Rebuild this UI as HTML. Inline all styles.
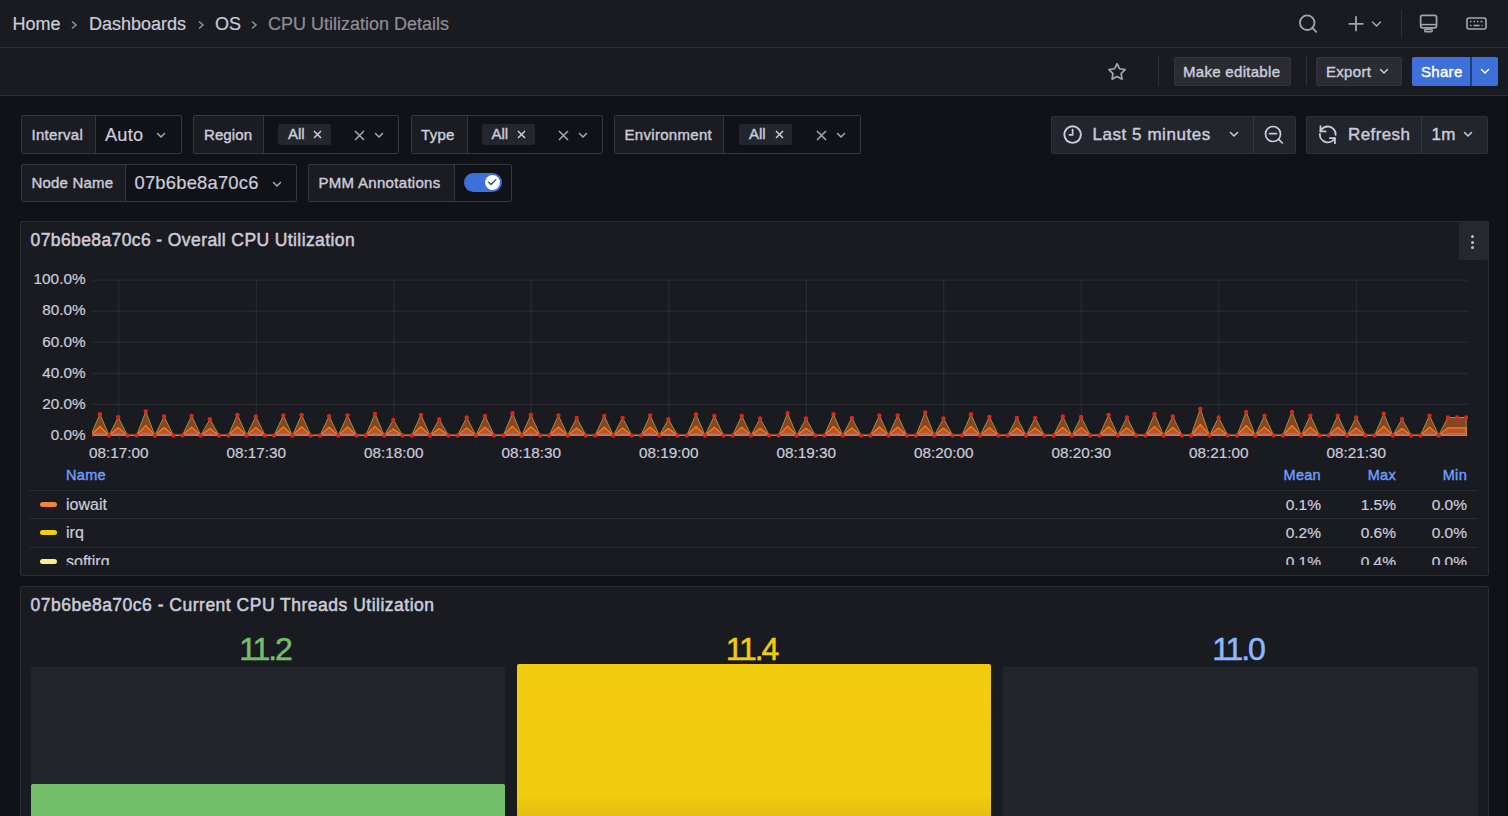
<!DOCTYPE html>
<html><head><meta charset="utf-8">
<style>
*{box-sizing:border-box;margin:0;padding:0}
html,body{width:1508px;height:816px;overflow:hidden;background:#111217;font-family:"Liberation Sans",sans-serif;color:#ccccdc}
.a{position:absolute}
.t{position:absolute;white-space:nowrap;line-height:1}
.bar{position:absolute;left:0;width:1508px;background:#1a1b20;border-bottom:1px solid #2c2e33}
.box{position:absolute;border:1px solid #36383e;border-radius:2px;background:#111217;overflow:hidden}
.lbl{position:absolute;top:0;bottom:0;left:0;background:#1b1c22;border-right:1px solid #36383e}
.chip{position:absolute;background:#23262c;border-radius:2px}
.btn{position:absolute;background:#2a2c31;border:1px solid #33353a;border-radius:2px}
.panel{position:absolute;background:#1a1b20;border:1px solid #2b2d33;border-radius:2px;overflow:hidden}
.sec{color:#8e8e99}
.m{-webkit-text-stroke:0.4px currentColor}
.m2{-webkit-text-stroke:0.2px currentColor}
svg.i{position:absolute;overflow:visible}
</style></head><body>
<!-- top bar -->
<div class="bar" style="top:0;height:48px"></div>
<div class="bar" style="top:48px;height:48px"></div>
<div class="t m2" style="left:12.5px;top:14.6px;font-size:18px">Home</div>
<svg class="i" style="left:70px;top:19.5px" width="8" height="10"><path d="M2 1.5 L6 5 L2 8.5" fill="none" stroke="#8e8e99" stroke-width="1.6"/></svg>
<div class="t m2" style="left:89px;top:14.6px;font-size:18px">Dashboards</div>
<svg class="i" style="left:196.5px;top:19.5px" width="8" height="10"><path d="M2 1.5 L6 5 L2 8.5" fill="none" stroke="#8e8e99" stroke-width="1.6"/></svg>
<div class="t m2" style="left:215px;top:14.6px;font-size:18px">OS</div>
<svg class="i" style="left:249.5px;top:19.5px" width="8" height="10"><path d="M2 1.5 L6 5 L2 8.5" fill="none" stroke="#8e8e99" stroke-width="1.6"/></svg>
<div class="t sec m2" style="left:268px;top:14.6px;font-size:18px">CPU Utilization Details</div>

<!-- top right icons -->
<svg class="i" style="left:1297px;top:12px" width="22" height="22" viewBox="0 0 22 22"><circle cx="10.2" cy="10.7" r="7.3" fill="none" stroke="#a4a4b0" stroke-width="1.8"/><path d="M15.5 16 L19.3 19.8" stroke="#a4a4b0" stroke-width="1.8" stroke-linecap="round"/></svg>
<svg class="i" style="left:1347px;top:15px" width="18" height="18" viewBox="0 0 18 18"><path d="M9 1.8 V15.5 M2.3 8.8 H15.8" stroke="#a4a4b0" stroke-width="1.8" stroke-linecap="round"/></svg>
<svg class="i" style="left:1371px;top:20px" width="11" height="8" viewBox="0 0 11 8"><path d="M1.5 2 L5.5 6 L9.5 2" fill="none" stroke="#a8a8b4" stroke-width="1.5" stroke-linecap="round"/></svg>
<div class="a" style="left:1401px;top:10px;width:1px;height:27px;background:#2f3136"></div>
<svg class="i" style="left:1419px;top:14px" width="20" height="20" viewBox="0 0 20 20"><rect x="1.65" y="1.35" width="15.9" height="12.5" rx="2" fill="none" stroke="#a4a4b0" stroke-width="1.7"/><path d="M1.65 10.6 H17.5" stroke="#a4a4b0" stroke-width="1.5"/><rect x="5.75" y="15.4" width="7.4" height="2.4" rx="1.1" fill="none" stroke="#a4a4b0" stroke-width="1.6"/></svg>
<svg class="i" style="left:1466px;top:17px" width="21" height="13" viewBox="0 0 21 13"><rect x="1" y="1" width="19" height="11" rx="2" fill="none" stroke="#a8a8b4" stroke-width="1.6"/><path d="M4 4.5h1.5M7.5 4.5h1.5M11 4.5h1.5M14.5 4.5h2M4 8.5h1.5M7.5 8.5h6M15.5 8.5h1" stroke="#a8a8b4" stroke-width="1.5"/></svg>

<!-- toolbar row -->
<svg class="i" style="left:1106px;top:61px" width="22" height="22" viewBox="0 0 22 22"><path d="M11.05 2.75 L13.58 7.77 L19.13 8.62 L15.14 12.58 L16.05 18.13 L11.05 15.55 L6.05 18.13 L6.96 12.58 L2.97 8.62 L8.52 7.77 Z" fill="none" stroke="#a4a4b0" stroke-width="1.7" stroke-linejoin="round"/></svg>
<div class="a" style="left:1158px;top:57px;width:1px;height:29px;background:#2f3136"></div>
<div class="btn" style="left:1174px;top:57px;width:117px;height:29px"></div>
<div class="t m" style="left:1183px;top:63.9px;font-size:15px;letter-spacing:0.3px">Make editable</div>
<div class="a" style="left:1306px;top:57px;width:1px;height:29px;background:#2f3136"></div>
<div class="btn" style="left:1316px;top:57px;width:86px;height:29px"></div>
<div class="t m" style="left:1326px;top:63.9px;font-size:15px;letter-spacing:0.3px">Export</div>
<svg class="i" style="left:1379px;top:68px" width="10" height="7" viewBox="0 0 10 7"><path d="M1.5 1.5 L5 5 L8.5 1.5" fill="none" stroke="#ccccdc" stroke-width="1.5" stroke-linecap="round"/></svg>
<div class="a" style="left:1412px;top:57px;width:86px;height:29px;background:#3d71d9;border-radius:2px"></div>
<div class="a" style="left:1470px;top:57px;width:1.5px;height:29px;background:#1f3f80"></div>
<div class="t m" style="left:1421px;top:63.9px;font-size:15px;letter-spacing:0.3px;color:#fff">Share</div>
<svg class="i" style="left:1480px;top:68px" width="10" height="7" viewBox="0 0 10 7"><path d="M1.5 1.5 L5 5 L8.5 1.5" fill="none" stroke="#fff" stroke-width="1.5" stroke-linecap="round"/></svg>

<!-- right scrollbar strip -->
<div class="a" style="left:1506px;top:96px;width:2px;height:720px;background:#0e0f13"></div>

<!-- variables row 1 -->
<div class="box" style="left:21px;top:115px;width:161px;height:39px"><div class="lbl" style="width:74px"></div></div>
<div class="t m" style="left:31.5px;top:126.8px;font-size:15px;letter-spacing:0.3px">Interval</div>
<div class="t m2" style="left:105px;top:126.2px;font-size:18.2px;letter-spacing:0.2px">Auto</div>
<svg class="i" style="left:156px;top:132px" width="10" height="7" viewBox="0 0 10 7"><path d="M1.5 1.5 L5 5 L8.5 1.5" fill="none" stroke="#a8a8b4" stroke-width="1.5" stroke-linecap="round"/></svg>

<div class="box" style="left:193px;top:115px;width:206px;height:39px"><div class="lbl" style="width:70px"></div></div>
<div class="t m" style="left:204px;top:126.8px;font-size:15px;letter-spacing:0.1px">Region</div>
<div class="chip" style="left:278px;top:124px;width:52.5px;height:21px"></div>
<div class="t m" style="left:288px;top:126.3px;font-size:15px">All</div>
<svg class="i" style="left:313px;top:130px" width="9" height="9" viewBox="0 0 9 9"><path d="M1 1 L8 8 M8 1 L1 8" stroke="#ccccdc" stroke-width="1.5"/></svg>
<svg class="i" style="left:354px;top:130px" width="11" height="11" viewBox="0 0 11 11"><path d="M1 1 L10 10 M10 1 L1 10" stroke="#a8a8b4" stroke-width="1.5"/></svg>
<svg class="i" style="left:374px;top:132px" width="10" height="7" viewBox="0 0 10 7"><path d="M1.5 1.5 L5 5 L8.5 1.5" fill="none" stroke="#a8a8b4" stroke-width="1.5" stroke-linecap="round"/></svg>

<div class="box" style="left:411px;top:115px;width:192px;height:39px"><div class="lbl" style="width:55.5px"></div></div>
<div class="t m" style="left:421px;top:126.8px;font-size:15px;letter-spacing:0.3px">Type</div>
<div class="chip" style="left:481.5px;top:124px;width:53px;height:21px"></div>
<div class="t m" style="left:491.5px;top:126.3px;font-size:15px">All</div>
<svg class="i" style="left:517px;top:130px" width="9" height="9" viewBox="0 0 9 9"><path d="M1 1 L8 8 M8 1 L1 8" stroke="#ccccdc" stroke-width="1.5"/></svg>
<svg class="i" style="left:558px;top:130px" width="11" height="11" viewBox="0 0 11 11"><path d="M1 1 L10 10 M10 1 L1 10" stroke="#a8a8b4" stroke-width="1.5"/></svg>
<svg class="i" style="left:578px;top:132px" width="10" height="7" viewBox="0 0 10 7"><path d="M1.5 1.5 L5 5 L8.5 1.5" fill="none" stroke="#a8a8b4" stroke-width="1.5" stroke-linecap="round"/></svg>

<div class="box" style="left:614px;top:115px;width:246.5px;height:39px"><div class="lbl" style="width:109px"></div></div>
<div class="t m" style="left:624.5px;top:126.8px;font-size:15px;letter-spacing:0.3px">Environment</div>
<div class="chip" style="left:739px;top:124px;width:53px;height:21px"></div>
<div class="t m" style="left:749px;top:126.3px;font-size:15px">All</div>
<svg class="i" style="left:774.5px;top:130px" width="9" height="9" viewBox="0 0 9 9"><path d="M1 1 L8 8 M8 1 L1 8" stroke="#ccccdc" stroke-width="1.5"/></svg>
<svg class="i" style="left:816px;top:130px" width="11" height="11" viewBox="0 0 11 11"><path d="M1 1 L10 10 M10 1 L1 10" stroke="#a8a8b4" stroke-width="1.5"/></svg>
<svg class="i" style="left:836px;top:132px" width="10" height="7" viewBox="0 0 10 7"><path d="M1.5 1.5 L5 5 L8.5 1.5" fill="none" stroke="#a8a8b4" stroke-width="1.5" stroke-linecap="round"/></svg>

<!-- variables row 2 -->
<div class="box" style="left:21px;top:163.5px;width:275.5px;height:38px"><div class="lbl" style="width:103.5px"></div></div>
<div class="t m" style="left:31.5px;top:174.5px;font-size:15px;letter-spacing:0.2px">Node Name</div>
<div class="t m2" style="left:134.5px;top:173.7px;font-size:18.4px;letter-spacing:0.2px">07b6be8a70c6</div>
<svg class="i" style="left:271.5px;top:180.5px" width="10" height="7" viewBox="0 0 10 7"><path d="M1.5 1.5 L5 5 L8.5 1.5" fill="none" stroke="#a8a8b4" stroke-width="1.5" stroke-linecap="round"/></svg>

<div class="box" style="left:308px;top:163.5px;width:204px;height:38px"><div class="lbl" style="width:145.5px"></div></div>
<div class="t m" style="left:318.5px;top:174.5px;font-size:15px;letter-spacing:0.3px">PMM Annotations</div>
<div class="a" style="left:463.5px;top:173px;width:38px;height:19px;border-radius:10px;background:#3d71d9"></div>
<div class="a" style="left:484.8px;top:174.9px;width:15px;height:15px;border-radius:8px;background:#fff"></div>
<svg class="i" style="left:487.2px;top:178.2px" width="11" height="9" viewBox="0 0 11 9"><path d="M1.5 4.2 L4 6.5 L8.8 1.8" fill="none" stroke="#3a4f94" stroke-width="1.4" stroke-linecap="round" stroke-linejoin="round"/></svg>

<!-- time picker -->
<div class="a" style="left:1051px;top:115.5px;width:244.5px;height:38px;background:#22252b;border:1px solid #2e3036;border-radius:2px"></div>
<div class="a" style="left:1253px;top:116px;width:1px;height:37px;background:#34363c"></div>
<svg class="i" style="left:1062.5px;top:125px" width="19" height="19" viewBox="0 0 19 19"><circle cx="9.6" cy="9.6" r="8.3" fill="none" stroke="#ccccdc" stroke-width="1.9"/><path d="M9.6 4.6 V9.8 H6.4" fill="none" stroke="#ccccdc" stroke-width="1.7" stroke-linecap="round"/></svg>
<div class="t m" style="left:1092.5px;top:126.1px;font-size:17px;letter-spacing:0.55px">Last 5 minutes</div>
<svg class="i" style="left:1228.5px;top:131px" width="10" height="7" viewBox="0 0 10 7"><path d="M1.5 1.5 L5 5 L8.5 1.5" fill="none" stroke="#ccccdc" stroke-width="1.5" stroke-linecap="round"/></svg>
<svg class="i" style="left:1263.5px;top:125px" width="21" height="21" viewBox="0 0 21 21"><circle cx="9" cy="9" r="7.5" fill="none" stroke="#ccccdc" stroke-width="1.7"/><path d="M5.5 8.6 H12.5 M14.5 14.2 L18.3 18" stroke="#ccccdc" stroke-width="1.7" stroke-linecap="round"/></svg>

<div class="a" style="left:1306px;top:115.5px;width:182px;height:38px;background:#22252b;border:1px solid #2e3036;border-radius:2px"></div>
<div class="a" style="left:1421px;top:116px;width:1px;height:37px;background:#34363c"></div>
<svg class="i" style="left:1317.5px;top:125px" width="20" height="20" viewBox="0 0 20 20"><path d="M17.64 9.81 A7.9 7.9 0 0 0 2.43 6.44 M1.86 8.99 A7.9 7.9 0 0 0 16.73 13.11" fill="none" stroke="#ccccdc" stroke-width="1.8" stroke-linecap="round"/><path d="M2.5 1.2 V6.4 H7.6 M11.9 13.2 H16.9 V18.2" fill="none" stroke="#ccccdc" stroke-width="1.8" stroke-linecap="round" stroke-linejoin="round"/></svg>
<div class="t m" style="left:1348px;top:126.1px;font-size:17px;letter-spacing:0.4px">Refresh</div>
<div class="t m" style="left:1431.5px;top:126.1px;font-size:17px;letter-spacing:0.3px">1m</div>
<svg class="i" style="left:1463px;top:131px" width="10" height="7" viewBox="0 0 10 7"><path d="M1.5 1.5 L5 5 L8.5 1.5" fill="none" stroke="#ccccdc" stroke-width="1.5" stroke-linecap="round"/></svg>

<!-- panel 1 -->
<div class="panel" style="left:20px;top:221px;width:1469px;height:355px"></div>
<div class="a" style="left:1459px;top:222px;width:29px;height:38px;background:#26282d;border-radius:2px"></div>
<div class="a" style="left:1471px;top:235px;width:3px;height:3px;border-radius:2px;background:#c0c0cc"></div>
<div class="a" style="left:1471px;top:240.5px;width:3px;height:3px;border-radius:2px;background:#c0c0cc"></div>
<div class="a" style="left:1471px;top:246px;width:3px;height:3px;border-radius:2px;background:#c0c0cc"></div>
<div class="t m" style="left:30.5px;top:232.0px;font-size:17.5px;letter-spacing:0.4px;-webkit-text-stroke:0.5px currentColor">07b6be8a70c6 - Overall CPU Utilization</div>
<div class="t m2" style="left:25px;top:271.3px;width:60.5px;text-align:right;font-size:15.3px">100.0%</div>
<div class="t m2" style="left:25px;top:302.4px;width:60.5px;text-align:right;font-size:15.3px">80.0%</div>
<div class="t m2" style="left:25px;top:333.5px;width:60.5px;text-align:right;font-size:15.3px">60.0%</div>
<div class="t m2" style="left:25px;top:364.5px;width:60.5px;text-align:right;font-size:15.3px">40.0%</div>
<div class="t m2" style="left:25px;top:395.6px;width:60.5px;text-align:right;font-size:15.3px">20.0%</div>
<div class="t m2" style="left:25px;top:426.6px;width:60.5px;text-align:right;font-size:15.3px">0.0%</div>
<div class="t m2" style="left:68.8px;top:445.0px;width:100px;text-align:center;font-size:15.3px">08:17:00</div>
<div class="t m2" style="left:206.3px;top:445.0px;width:100px;text-align:center;font-size:15.3px">08:17:30</div>
<div class="t m2" style="left:343.8px;top:445.0px;width:100px;text-align:center;font-size:15.3px">08:18:00</div>
<div class="t m2" style="left:481.3px;top:445.0px;width:100px;text-align:center;font-size:15.3px">08:18:30</div>
<div class="t m2" style="left:618.8px;top:445.0px;width:100px;text-align:center;font-size:15.3px">08:19:00</div>
<div class="t m2" style="left:756.3px;top:445.0px;width:100px;text-align:center;font-size:15.3px">08:19:30</div>
<div class="t m2" style="left:893.8px;top:445.0px;width:100px;text-align:center;font-size:15.3px">08:20:00</div>
<div class="t m2" style="left:1031.3px;top:445.0px;width:100px;text-align:center;font-size:15.3px">08:20:30</div>
<div class="t m2" style="left:1168.8px;top:445.0px;width:100px;text-align:center;font-size:15.3px">08:21:00</div>
<div class="t m2" style="left:1306.3px;top:445.0px;width:100px;text-align:center;font-size:15.3px">08:21:30</div>
<svg class="chart" width="1508" height="816" viewBox="0 0 1508 816" style="position:absolute;left:0;top:0">
<defs><clipPath id="pc"><rect x="92" y="270" width="1376" height="170"/></clipPath></defs>
<line x1="92" y1="280.1" x2="1468" y2="280.1" stroke="rgba(204,204,220,0.10)" stroke-width="1"/>
<line x1="92" y1="311.2" x2="1468" y2="311.2" stroke="rgba(204,204,220,0.10)" stroke-width="1"/>
<line x1="92" y1="342.2" x2="1468" y2="342.2" stroke="rgba(204,204,220,0.10)" stroke-width="1"/>
<line x1="92" y1="373.3" x2="1468" y2="373.3" stroke="rgba(204,204,220,0.10)" stroke-width="1"/>
<line x1="92" y1="404.3" x2="1468" y2="404.3" stroke="rgba(204,204,220,0.10)" stroke-width="1"/>
<line x1="92" y1="435.4" x2="1468" y2="435.4" stroke="rgba(204,204,220,0.10)" stroke-width="1"/>
<line x1="118.8" y1="280.1" x2="118.8" y2="440" stroke="rgba(204,204,220,0.10)" stroke-width="1"/>
<line x1="256.3" y1="280.1" x2="256.3" y2="440" stroke="rgba(204,204,220,0.10)" stroke-width="1"/>
<line x1="393.8" y1="280.1" x2="393.8" y2="440" stroke="rgba(204,204,220,0.10)" stroke-width="1"/>
<line x1="531.3" y1="280.1" x2="531.3" y2="440" stroke="rgba(204,204,220,0.10)" stroke-width="1"/>
<line x1="668.8" y1="280.1" x2="668.8" y2="440" stroke="rgba(204,204,220,0.10)" stroke-width="1"/>
<line x1="806.3" y1="280.1" x2="806.3" y2="440" stroke="rgba(204,204,220,0.10)" stroke-width="1"/>
<line x1="943.8" y1="280.1" x2="943.8" y2="440" stroke="rgba(204,204,220,0.10)" stroke-width="1"/>
<line x1="1081.3" y1="280.1" x2="1081.3" y2="440" stroke="rgba(204,204,220,0.10)" stroke-width="1"/>
<line x1="1218.8" y1="280.1" x2="1218.8" y2="440" stroke="rgba(204,204,220,0.10)" stroke-width="1"/>
<line x1="1356.3" y1="280.1" x2="1356.3" y2="440" stroke="rgba(204,204,220,0.10)" stroke-width="1"/>
<g clip-path="url(#pc)">
<polygon points="90.7,435.4 90.7,435.4 99.9,414.3 109.1,435.4 118.2,417.3 127.4,435.4 136.6,435.4 145.8,411.5 154.9,435.4 164.1,416.5 173.3,435.4 182.4,435.4 191.6,415.9 200.8,435.4 209.9,419.3 219.1,435.4 228.3,435.4 237.4,414.9 246.6,435.4 255.8,416.5 265.0,435.4 274.1,435.4 283.3,415.5 292.5,435.4 301.6,414.9 310.8,435.4 320.0,435.4 329.1,416.1 338.3,435.4 347.5,415.5 356.7,435.4 365.8,435.4 375.0,413.9 384.2,435.4 393.3,419.9 402.5,435.4 411.7,435.4 420.9,414.9 430.0,435.4 439.2,419.3 448.4,435.4 457.5,435.4 466.7,417.5 475.9,435.4 485.0,415.9 494.2,435.4 503.4,435.4 512.5,413.3 521.7,435.4 530.9,414.9 540.1,435.4 549.2,435.4 558.4,415.5 567.6,435.4 576.7,417.9 585.9,435.4 595.1,435.4 604.2,415.9 613.4,435.4 622.6,417.9 631.8,435.4 640.9,435.4 650.1,415.5 659.3,435.4 668.4,419.3 677.6,435.4 686.8,435.4 696.0,414.3 705.1,435.4 714.3,415.9 723.5,435.4 732.6,435.4 741.8,415.9 751.0,435.4 760.1,418.5 769.3,435.4 778.5,435.4 787.6,413.3 796.8,435.4 806.0,418.5 815.2,435.4 824.3,435.4 833.5,414.3 842.7,435.4 851.8,417.9 861.0,435.4 870.2,435.4 879.4,415.5 888.5,435.4 897.7,415.5 906.9,435.4 916.0,435.4 925.2,412.5 934.4,435.4 943.5,418.5 952.7,435.4 961.9,435.4 971.0,414.3 980.2,435.4 989.4,416.9 998.6,435.4 1007.7,435.4 1016.9,417.9 1026.1,435.4 1035.2,417.9 1044.4,435.4 1053.6,435.4 1062.8,416.5 1071.9,435.4 1081.1,416.9 1090.3,435.4 1099.4,435.4 1108.6,415.0 1117.8,435.4 1126.9,417.5 1136.1,435.4 1145.3,435.4 1154.5,414.0 1163.6,435.4 1172.8,416.5 1182.0,435.4 1191.1,435.4 1200.3,409.0 1209.5,435.4 1218.6,417.5 1227.8,435.4 1237.0,435.4 1246.2,411.9 1255.3,435.4 1264.5,415.6 1273.7,435.4 1282.8,435.4 1292.0,411.9 1301.2,435.4 1310.3,415.6 1319.5,435.4 1328.7,435.4 1337.8,415.6 1347.0,435.4 1356.2,417.5 1365.4,435.4 1374.5,435.4 1383.7,413.8 1392.9,435.4 1402.0,419.0 1411.2,435.4 1420.4,435.4 1429.5,415.6 1438.7,435.4 1447.9,417.5 1457.1,417.5 1466.2,417.5 1466.2,435.4" fill="#8a4520" stroke="#a09046" stroke-width="1" stroke-linejoin="round"/>
<polygon points="90.7,435.4 90.7,435.4 99.9,426.5 109.1,435.4 118.2,427.8 127.4,435.4 136.6,435.4 145.8,425.4 154.9,435.4 164.1,427.5 173.3,435.4 182.4,435.4 191.6,427.2 200.8,435.4 209.9,428.6 219.1,435.4 228.3,435.4 237.4,426.8 246.6,435.4 255.8,427.5 265.0,435.4 274.1,435.4 283.3,427.0 292.5,435.4 301.6,426.8 310.8,435.4 320.0,435.4 329.1,427.3 338.3,435.4 347.5,427.0 356.7,435.4 365.8,435.4 375.0,426.4 384.2,435.4 393.3,428.9 402.5,435.4 411.7,435.4 420.9,426.8 430.0,435.4 439.2,428.6 448.4,435.4 457.5,435.4 466.7,427.9 475.9,435.4 485.0,427.2 494.2,435.4 503.4,435.4 512.5,426.1 521.7,435.4 530.9,426.8 540.1,435.4 549.2,435.4 558.4,427.0 567.6,435.4 576.7,428.0 585.9,435.4 595.1,435.4 604.2,427.2 613.4,435.4 622.6,428.0 631.8,435.4 640.9,435.4 650.1,427.0 659.3,435.4 668.4,428.6 677.6,435.4 686.8,435.4 696.0,426.5 705.1,435.4 714.3,427.2 723.5,435.4 732.6,435.4 741.8,427.2 751.0,435.4 760.1,428.3 769.3,435.4 778.5,435.4 787.6,426.1 796.8,435.4 806.0,428.3 815.2,435.4 824.3,435.4 833.5,426.5 842.7,435.4 851.8,428.0 861.0,435.4 870.2,435.4 879.4,427.0 888.5,435.4 897.7,427.0 906.9,435.4 916.0,435.4 925.2,425.8 934.4,435.4 943.5,428.3 952.7,435.4 961.9,435.4 971.0,426.5 980.2,435.4 989.4,427.6 998.6,435.4 1007.7,435.4 1016.9,428.0 1026.1,435.4 1035.2,428.0 1044.4,435.4 1053.6,435.4 1062.8,427.5 1071.9,435.4 1081.1,427.6 1090.3,435.4 1099.4,435.4 1108.6,426.8 1117.8,435.4 1126.9,427.9 1136.1,435.4 1145.3,435.4 1154.5,426.4 1163.6,435.4 1172.8,427.5 1182.0,435.4 1191.1,435.4 1200.3,424.3 1209.5,435.4 1218.6,427.9 1227.8,435.4 1237.0,435.4 1246.2,425.5 1255.3,435.4 1264.5,427.1 1273.7,435.4 1282.8,435.4 1292.0,425.5 1301.2,435.4 1310.3,427.1 1319.5,435.4 1328.7,435.4 1337.8,427.1 1347.0,435.4 1356.2,427.9 1365.4,435.4 1374.5,435.4 1383.7,426.3 1392.9,435.4 1402.0,428.5 1411.2,435.4 1420.4,435.4 1429.5,427.1 1438.7,435.4 1447.9,427.9 1457.1,427.9 1466.2,427.9 1466.2,435.4" fill="#b9561a" stroke="#f0802e" stroke-width="1.2" stroke-linejoin="round"/>
<polygon points="90.7,435.4 90.7,435.4 99.9,433.5 109.1,435.4 118.2,433.8 127.4,435.4 136.6,435.4 145.8,433.2 154.9,435.4 164.1,433.7 173.3,435.4 182.4,435.4 191.6,433.6 200.8,435.4 209.9,434.0 219.1,435.4 228.3,435.4 237.4,433.6 246.6,435.4 255.8,433.7 265.0,435.4 274.1,435.4 283.3,433.6 292.5,435.4 301.6,433.6 310.8,435.4 320.0,435.4 329.1,433.7 338.3,435.4 347.5,433.6 356.7,435.4 365.8,435.4 375.0,433.5 384.2,435.4 393.3,434.0 402.5,435.4 411.7,435.4 420.9,433.6 430.0,435.4 439.2,434.0 448.4,435.4 457.5,435.4 466.7,433.8 475.9,435.4 485.0,433.6 494.2,435.4 503.4,435.4 512.5,433.4 521.7,435.4 530.9,433.6 540.1,435.4 549.2,435.4 558.4,433.6 567.6,435.4 576.7,433.8 585.9,435.4 595.1,435.4 604.2,433.6 613.4,435.4 622.6,433.8 631.8,435.4 640.9,435.4 650.1,433.6 659.3,435.4 668.4,434.0 677.6,435.4 686.8,435.4 696.0,433.5 705.1,435.4 714.3,433.6 723.5,435.4 732.6,435.4 741.8,433.6 751.0,435.4 760.1,433.9 769.3,435.4 778.5,435.4 787.6,433.4 796.8,435.4 806.0,433.9 815.2,435.4 824.3,435.4 833.5,433.5 842.7,435.4 851.8,433.8 861.0,435.4 870.2,435.4 879.4,433.6 888.5,435.4 897.7,433.6 906.9,435.4 916.0,435.4 925.2,433.3 934.4,435.4 943.5,433.9 952.7,435.4 961.9,435.4 971.0,433.5 980.2,435.4 989.4,433.7 998.6,435.4 1007.7,435.4 1016.9,433.8 1026.1,435.4 1035.2,433.8 1044.4,435.4 1053.6,435.4 1062.8,433.7 1071.9,435.4 1081.1,433.7 1090.3,435.4 1099.4,435.4 1108.6,433.6 1117.8,435.4 1126.9,433.8 1136.1,435.4 1145.3,435.4 1154.5,433.5 1163.6,435.4 1172.8,433.7 1182.0,435.4 1191.1,435.4 1200.3,433.0 1209.5,435.4 1218.6,433.8 1227.8,435.4 1237.0,435.4 1246.2,433.3 1255.3,435.4 1264.5,433.6 1273.7,435.4 1282.8,435.4 1292.0,433.3 1301.2,435.4 1310.3,433.6 1319.5,435.4 1328.7,435.4 1337.8,433.6 1347.0,435.4 1356.2,433.8 1365.4,435.4 1374.5,435.4 1383.7,433.5 1392.9,435.4 1402.0,433.9 1411.2,435.4 1420.4,435.4 1429.5,433.6 1438.7,435.4 1447.9,433.8 1457.1,433.8 1466.2,433.8 1466.2,435.4" fill="#b85a5c" stroke="#d86a7a" stroke-width="1"/>
<line x1="92" y1="435.4" x2="1467" y2="435.4" stroke="#6ea86a" stroke-width="1" stroke-opacity="0.7"/>
<circle cx="90.7" cy="435.4" r="2.2" fill="#d8281a"/>
<circle cx="99.9" cy="414.3" r="2.2" fill="#d8281a"/>
<circle cx="109.1" cy="435.4" r="2.2" fill="#d8281a"/>
<circle cx="118.2" cy="417.3" r="2.2" fill="#d8281a"/>
<circle cx="127.4" cy="435.4" r="2.2" fill="#d8281a"/>
<circle cx="136.6" cy="435.4" r="2.2" fill="#d8281a"/>
<circle cx="145.8" cy="411.5" r="2.2" fill="#d8281a"/>
<circle cx="154.9" cy="435.4" r="2.2" fill="#d8281a"/>
<circle cx="164.1" cy="416.5" r="2.2" fill="#d8281a"/>
<circle cx="173.3" cy="435.4" r="2.2" fill="#d8281a"/>
<circle cx="182.4" cy="435.4" r="2.2" fill="#d8281a"/>
<circle cx="191.6" cy="415.9" r="2.2" fill="#d8281a"/>
<circle cx="200.8" cy="435.4" r="2.2" fill="#d8281a"/>
<circle cx="209.9" cy="419.3" r="2.2" fill="#d8281a"/>
<circle cx="219.1" cy="435.4" r="2.2" fill="#d8281a"/>
<circle cx="228.3" cy="435.4" r="2.2" fill="#d8281a"/>
<circle cx="237.4" cy="414.9" r="2.2" fill="#d8281a"/>
<circle cx="246.6" cy="435.4" r="2.2" fill="#d8281a"/>
<circle cx="255.8" cy="416.5" r="2.2" fill="#d8281a"/>
<circle cx="265.0" cy="435.4" r="2.2" fill="#d8281a"/>
<circle cx="274.1" cy="435.4" r="2.2" fill="#d8281a"/>
<circle cx="283.3" cy="415.5" r="2.2" fill="#d8281a"/>
<circle cx="292.5" cy="435.4" r="2.2" fill="#d8281a"/>
<circle cx="301.6" cy="414.9" r="2.2" fill="#d8281a"/>
<circle cx="310.8" cy="435.4" r="2.2" fill="#d8281a"/>
<circle cx="320.0" cy="435.4" r="2.2" fill="#d8281a"/>
<circle cx="329.1" cy="416.1" r="2.2" fill="#d8281a"/>
<circle cx="338.3" cy="435.4" r="2.2" fill="#d8281a"/>
<circle cx="347.5" cy="415.5" r="2.2" fill="#d8281a"/>
<circle cx="356.7" cy="435.4" r="2.2" fill="#d8281a"/>
<circle cx="365.8" cy="435.4" r="2.2" fill="#d8281a"/>
<circle cx="375.0" cy="413.9" r="2.2" fill="#d8281a"/>
<circle cx="384.2" cy="435.4" r="2.2" fill="#d8281a"/>
<circle cx="393.3" cy="419.9" r="2.2" fill="#d8281a"/>
<circle cx="402.5" cy="435.4" r="2.2" fill="#d8281a"/>
<circle cx="411.7" cy="435.4" r="2.2" fill="#d8281a"/>
<circle cx="420.9" cy="414.9" r="2.2" fill="#d8281a"/>
<circle cx="430.0" cy="435.4" r="2.2" fill="#d8281a"/>
<circle cx="439.2" cy="419.3" r="2.2" fill="#d8281a"/>
<circle cx="448.4" cy="435.4" r="2.2" fill="#d8281a"/>
<circle cx="457.5" cy="435.4" r="2.2" fill="#d8281a"/>
<circle cx="466.7" cy="417.5" r="2.2" fill="#d8281a"/>
<circle cx="475.9" cy="435.4" r="2.2" fill="#d8281a"/>
<circle cx="485.0" cy="415.9" r="2.2" fill="#d8281a"/>
<circle cx="494.2" cy="435.4" r="2.2" fill="#d8281a"/>
<circle cx="503.4" cy="435.4" r="2.2" fill="#d8281a"/>
<circle cx="512.5" cy="413.3" r="2.2" fill="#d8281a"/>
<circle cx="521.7" cy="435.4" r="2.2" fill="#d8281a"/>
<circle cx="530.9" cy="414.9" r="2.2" fill="#d8281a"/>
<circle cx="540.1" cy="435.4" r="2.2" fill="#d8281a"/>
<circle cx="549.2" cy="435.4" r="2.2" fill="#d8281a"/>
<circle cx="558.4" cy="415.5" r="2.2" fill="#d8281a"/>
<circle cx="567.6" cy="435.4" r="2.2" fill="#d8281a"/>
<circle cx="576.7" cy="417.9" r="2.2" fill="#d8281a"/>
<circle cx="585.9" cy="435.4" r="2.2" fill="#d8281a"/>
<circle cx="595.1" cy="435.4" r="2.2" fill="#d8281a"/>
<circle cx="604.2" cy="415.9" r="2.2" fill="#d8281a"/>
<circle cx="613.4" cy="435.4" r="2.2" fill="#d8281a"/>
<circle cx="622.6" cy="417.9" r="2.2" fill="#d8281a"/>
<circle cx="631.8" cy="435.4" r="2.2" fill="#d8281a"/>
<circle cx="640.9" cy="435.4" r="2.2" fill="#d8281a"/>
<circle cx="650.1" cy="415.5" r="2.2" fill="#d8281a"/>
<circle cx="659.3" cy="435.4" r="2.2" fill="#d8281a"/>
<circle cx="668.4" cy="419.3" r="2.2" fill="#d8281a"/>
<circle cx="677.6" cy="435.4" r="2.2" fill="#d8281a"/>
<circle cx="686.8" cy="435.4" r="2.2" fill="#d8281a"/>
<circle cx="696.0" cy="414.3" r="2.2" fill="#d8281a"/>
<circle cx="705.1" cy="435.4" r="2.2" fill="#d8281a"/>
<circle cx="714.3" cy="415.9" r="2.2" fill="#d8281a"/>
<circle cx="723.5" cy="435.4" r="2.2" fill="#d8281a"/>
<circle cx="732.6" cy="435.4" r="2.2" fill="#d8281a"/>
<circle cx="741.8" cy="415.9" r="2.2" fill="#d8281a"/>
<circle cx="751.0" cy="435.4" r="2.2" fill="#d8281a"/>
<circle cx="760.1" cy="418.5" r="2.2" fill="#d8281a"/>
<circle cx="769.3" cy="435.4" r="2.2" fill="#d8281a"/>
<circle cx="778.5" cy="435.4" r="2.2" fill="#d8281a"/>
<circle cx="787.6" cy="413.3" r="2.2" fill="#d8281a"/>
<circle cx="796.8" cy="435.4" r="2.2" fill="#d8281a"/>
<circle cx="806.0" cy="418.5" r="2.2" fill="#d8281a"/>
<circle cx="815.2" cy="435.4" r="2.2" fill="#d8281a"/>
<circle cx="824.3" cy="435.4" r="2.2" fill="#d8281a"/>
<circle cx="833.5" cy="414.3" r="2.2" fill="#d8281a"/>
<circle cx="842.7" cy="435.4" r="2.2" fill="#d8281a"/>
<circle cx="851.8" cy="417.9" r="2.2" fill="#d8281a"/>
<circle cx="861.0" cy="435.4" r="2.2" fill="#d8281a"/>
<circle cx="870.2" cy="435.4" r="2.2" fill="#d8281a"/>
<circle cx="879.4" cy="415.5" r="2.2" fill="#d8281a"/>
<circle cx="888.5" cy="435.4" r="2.2" fill="#d8281a"/>
<circle cx="897.7" cy="415.5" r="2.2" fill="#d8281a"/>
<circle cx="906.9" cy="435.4" r="2.2" fill="#d8281a"/>
<circle cx="916.0" cy="435.4" r="2.2" fill="#d8281a"/>
<circle cx="925.2" cy="412.5" r="2.2" fill="#d8281a"/>
<circle cx="934.4" cy="435.4" r="2.2" fill="#d8281a"/>
<circle cx="943.5" cy="418.5" r="2.2" fill="#d8281a"/>
<circle cx="952.7" cy="435.4" r="2.2" fill="#d8281a"/>
<circle cx="961.9" cy="435.4" r="2.2" fill="#d8281a"/>
<circle cx="971.0" cy="414.3" r="2.2" fill="#d8281a"/>
<circle cx="980.2" cy="435.4" r="2.2" fill="#d8281a"/>
<circle cx="989.4" cy="416.9" r="2.2" fill="#d8281a"/>
<circle cx="998.6" cy="435.4" r="2.2" fill="#d8281a"/>
<circle cx="1007.7" cy="435.4" r="2.2" fill="#d8281a"/>
<circle cx="1016.9" cy="417.9" r="2.2" fill="#d8281a"/>
<circle cx="1026.1" cy="435.4" r="2.2" fill="#d8281a"/>
<circle cx="1035.2" cy="417.9" r="2.2" fill="#d8281a"/>
<circle cx="1044.4" cy="435.4" r="2.2" fill="#d8281a"/>
<circle cx="1053.6" cy="435.4" r="2.2" fill="#d8281a"/>
<circle cx="1062.8" cy="416.5" r="2.2" fill="#d8281a"/>
<circle cx="1071.9" cy="435.4" r="2.2" fill="#d8281a"/>
<circle cx="1081.1" cy="416.9" r="2.2" fill="#d8281a"/>
<circle cx="1090.3" cy="435.4" r="2.2" fill="#d8281a"/>
<circle cx="1099.4" cy="435.4" r="2.2" fill="#d8281a"/>
<circle cx="1108.6" cy="415.0" r="2.2" fill="#d8281a"/>
<circle cx="1117.8" cy="435.4" r="2.2" fill="#d8281a"/>
<circle cx="1126.9" cy="417.5" r="2.2" fill="#d8281a"/>
<circle cx="1136.1" cy="435.4" r="2.2" fill="#d8281a"/>
<circle cx="1145.3" cy="435.4" r="2.2" fill="#d8281a"/>
<circle cx="1154.5" cy="414.0" r="2.2" fill="#d8281a"/>
<circle cx="1163.6" cy="435.4" r="2.2" fill="#d8281a"/>
<circle cx="1172.8" cy="416.5" r="2.2" fill="#d8281a"/>
<circle cx="1182.0" cy="435.4" r="2.2" fill="#d8281a"/>
<circle cx="1191.1" cy="435.4" r="2.2" fill="#d8281a"/>
<circle cx="1200.3" cy="409.0" r="2.2" fill="#d8281a"/>
<circle cx="1209.5" cy="435.4" r="2.2" fill="#d8281a"/>
<circle cx="1218.6" cy="417.5" r="2.2" fill="#d8281a"/>
<circle cx="1227.8" cy="435.4" r="2.2" fill="#d8281a"/>
<circle cx="1237.0" cy="435.4" r="2.2" fill="#d8281a"/>
<circle cx="1246.2" cy="411.9" r="2.2" fill="#d8281a"/>
<circle cx="1255.3" cy="435.4" r="2.2" fill="#d8281a"/>
<circle cx="1264.5" cy="415.6" r="2.2" fill="#d8281a"/>
<circle cx="1273.7" cy="435.4" r="2.2" fill="#d8281a"/>
<circle cx="1282.8" cy="435.4" r="2.2" fill="#d8281a"/>
<circle cx="1292.0" cy="411.9" r="2.2" fill="#d8281a"/>
<circle cx="1301.2" cy="435.4" r="2.2" fill="#d8281a"/>
<circle cx="1310.3" cy="415.6" r="2.2" fill="#d8281a"/>
<circle cx="1319.5" cy="435.4" r="2.2" fill="#d8281a"/>
<circle cx="1328.7" cy="435.4" r="2.2" fill="#d8281a"/>
<circle cx="1337.8" cy="415.6" r="2.2" fill="#d8281a"/>
<circle cx="1347.0" cy="435.4" r="2.2" fill="#d8281a"/>
<circle cx="1356.2" cy="417.5" r="2.2" fill="#d8281a"/>
<circle cx="1365.4" cy="435.4" r="2.2" fill="#d8281a"/>
<circle cx="1374.5" cy="435.4" r="2.2" fill="#d8281a"/>
<circle cx="1383.7" cy="413.8" r="2.2" fill="#d8281a"/>
<circle cx="1392.9" cy="435.4" r="2.2" fill="#d8281a"/>
<circle cx="1402.0" cy="419.0" r="2.2" fill="#d8281a"/>
<circle cx="1411.2" cy="435.4" r="2.2" fill="#d8281a"/>
<circle cx="1420.4" cy="435.4" r="2.2" fill="#d8281a"/>
<circle cx="1429.5" cy="415.6" r="2.2" fill="#d8281a"/>
<circle cx="1438.7" cy="435.4" r="2.2" fill="#d8281a"/>
<circle cx="1447.9" cy="417.5" r="2.2" fill="#d8281a"/>
<circle cx="1457.1" cy="417.5" r="2.2" fill="#d8281a"/>
<circle cx="1466.2" cy="417.5" r="2.2" fill="#d8281a"/>
</g></svg>
<!-- legend -->
<div class="t m" style="left:66px;top:468.3px;font-size:14.5px;letter-spacing:0.3px;color:#6e9fff">Name</div>
<div class="t m" style="left:1261px;top:468.3px;width:60px;text-align:right;font-size:14.5px;letter-spacing:0.3px;color:#6e9fff">Mean</div>
<div class="t m" style="left:1336px;top:468.3px;width:60px;text-align:right;font-size:14.5px;letter-spacing:0.3px;color:#6e9fff">Max</div>
<div class="t m" style="left:1407px;top:468.3px;width:60px;text-align:right;font-size:14.5px;letter-spacing:0.3px;color:#6e9fff">Min</div>
<div class="a" style="left:30px;top:489.5px;width:1448px;height:1px;background:#2b2d33"></div>
<div class="a" style="left:30px;top:518px;width:1448px;height:1px;background:#2b2d33"></div>
<div class="a" style="left:30px;top:546.5px;width:1448px;height:1px;background:#2b2d33"></div>
<div class="a" style="left:40px;top:501.5px;width:16.5px;height:5px;border-radius:3px;background:#ef843c"></div>
<div class="a" style="left:40px;top:530px;width:16.5px;height:5px;border-radius:3px;background:#f2cc0c"></div>
<div class="a" style="left:40px;top:558.5px;width:16.5px;height:5px;border-radius:3px;background:#f8ee8a"></div>
<div class="a" style="left:30px;top:490px;width:1450px;height:75px;overflow:hidden">
<div class="t m2" style="left:36px;top:0.5px;font-size:16px;line-height:28.5px">iowait</div>
<div class="t m2" style="left:36px;top:29px;font-size:16px;line-height:28.5px">irq</div>
<div class="t m2" style="left:36px;top:57.5px;font-size:16px;line-height:28.5px">softirq</div>
<div class="t" style="left:1240px;top:0.5px;width:51px;text-align:right;font-size:15.5px;line-height:28.5px;-webkit-text-stroke:0.2px currentColor">0.1%</div>
<div class="t" style="left:1315px;top:0.5px;width:51px;text-align:right;font-size:15.5px;line-height:28.5px;-webkit-text-stroke:0.2px currentColor">1.5%</div>
<div class="t" style="left:1386px;top:0.5px;width:51px;text-align:right;font-size:15.5px;line-height:28.5px;-webkit-text-stroke:0.2px currentColor">0.0%</div>
<div class="t" style="left:1240px;top:29px;width:51px;text-align:right;font-size:15.5px;line-height:28.5px;-webkit-text-stroke:0.2px currentColor">0.2%</div>
<div class="t" style="left:1315px;top:29px;width:51px;text-align:right;font-size:15.5px;line-height:28.5px;-webkit-text-stroke:0.2px currentColor">0.6%</div>
<div class="t" style="left:1386px;top:29px;width:51px;text-align:right;font-size:15.5px;line-height:28.5px;-webkit-text-stroke:0.2px currentColor">0.0%</div>
<div class="t" style="left:1240px;top:57.5px;width:51px;text-align:right;font-size:15.5px;line-height:28.5px;-webkit-text-stroke:0.2px currentColor">0.1%</div>
<div class="t" style="left:1315px;top:57.5px;width:51px;text-align:right;font-size:15.5px;line-height:28.5px;-webkit-text-stroke:0.2px currentColor">0.4%</div>
<div class="t" style="left:1386px;top:57.5px;width:51px;text-align:right;font-size:15.5px;line-height:28.5px;-webkit-text-stroke:0.2px currentColor">0.0%</div>
</div>

<!-- panel 2 -->
<div class="panel" style="left:20px;top:586px;width:1469px;height:240px"></div>
<div class="t m" style="left:30.5px;top:597.2px;font-size:17.5px;letter-spacing:0.5px;-webkit-text-stroke:0.5px currentColor">07b6be8a70c6 - Current CPU Threads Utilization</div>
<div class="t" style="left:27.5px;top:632.8px;width:475px;text-align:center;font-size:32px;letter-spacing:-2.1px;-webkit-text-stroke:0.5px currentColor;color:#73bf69">11.2</div>
<div class="t" style="left:514.5px;top:632.8px;width:474px;text-align:center;font-size:32px;letter-spacing:-2.1px;-webkit-text-stroke:0.5px currentColor;color:#f2cc0c">11.4</div>
<div class="t" style="left:1000.5px;top:632.8px;width:475px;text-align:center;font-size:32px;letter-spacing:-2.1px;-webkit-text-stroke:0.5px currentColor;color:#8ab8ff">11.0</div>
<div class="a" style="left:30.5px;top:667px;width:474.5px;height:160px;background:#22252b;border-radius:2px"></div>
<div class="a" style="left:30.5px;top:783.5px;width:474.5px;height:40px;background:#73bf69;border-radius:2px"></div>
<div class="a" style="left:517px;top:664px;width:474px;height:160px;background:linear-gradient(#f2cc0c 0%,#f0cb0e 82%,#e2b912 100%);border-radius:2px"></div>
<div class="a" style="left:1003px;top:667px;width:475px;height:160px;background:#22252b;border-radius:2px"></div>
</body></html>
